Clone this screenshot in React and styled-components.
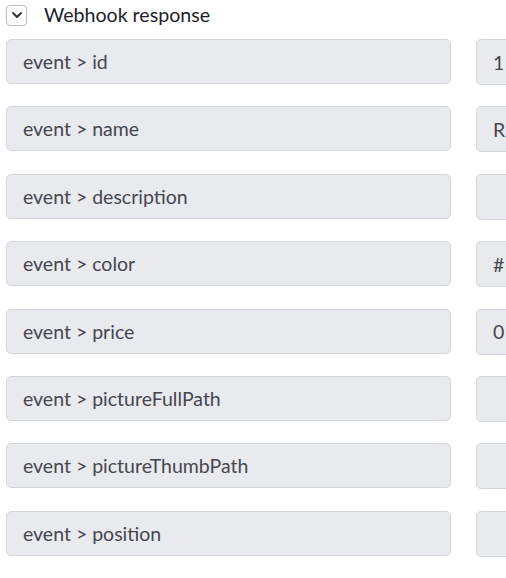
import React from "react";
import styled, { createGlobalStyle } from "styled-components";

const Global = createGlobalStyle`
  html, body { margin: 0; padding: 0; background: #ffffff; }
  body { font-family: Lato, "Open Sans", sans-serif; overflow: hidden; }
`;

const Page = styled.div`
  width: 506px;
  height: 578px;
  overflow: hidden;
  padding: 4px 0 0 6px;
  box-sizing: border-box;
`;

const Header = styled.div`
  display: flex;
  align-items: center;
  gap: 17px;
  height: 22px;
  margin-bottom: 13px;
`;

const Toggle = styled.div`
  width: 19px;
  height: 19px;
  border: 1px solid #b9bcc2;
  border-radius: 4px;
  display: flex;
  align-items: center;
  justify-content: center;
  box-sizing: content-box;
`;

const Title = styled.span`
  font-size: 19.6px;
  color: #1d1d2b;
  line-height: 22px;
`;

const Rows = styled.div`
  display: flex;
  flex-direction: column;
  gap: 21.4px;
`;

const Row = styled.div`
  display: grid;
  grid-template-columns: 445px 80px;
  column-gap: 25px;
  align-items: start;
`;

const Field = styled.div`
  height: ${(p) => (p.$value ? 46 : 45)}px;
  box-sizing: border-box;
  background: #e8eaed;
  border: 1px solid #d2d5da;
  border-radius: 5px;
  display: flex;
  align-items: center;
  padding-left: 16px;
  font-size: 19.5px;
  color: #46464f;
  white-space: nowrap;
  overflow: hidden;
`;

const rows = [
  ["event > id", "1"],
  ["event > name", "R"],
  ["event > description", ""],
  ["event > color", "#"],
  ["event > price", "0"],
  ["event > pictureFullPath", ""],
  ["event > pictureThumbPath", ""],
  ["event > position", ""],
];

export default function App() {
  return (
    <Page>
      <Global />
      <Header>
        <Toggle>
          <svg width="12" height="8" viewBox="0 0 12 8">
            <path d="M2 2 L6 6 L10 2" fill="none" stroke="#2a2a38" strokeWidth="1.8" strokeLinecap="round" strokeLinejoin="round" />
          </svg>
        </Toggle>
        <Title>Webhook response</Title>
      </Header>
      <Rows>
        {rows.map(([k, v]) => (
          <Row key={k}>
            <Field>{k}</Field>
            <Field $value>{v}</Field>
          </Row>
        ))}
      </Rows>
    </Page>
  );
}
